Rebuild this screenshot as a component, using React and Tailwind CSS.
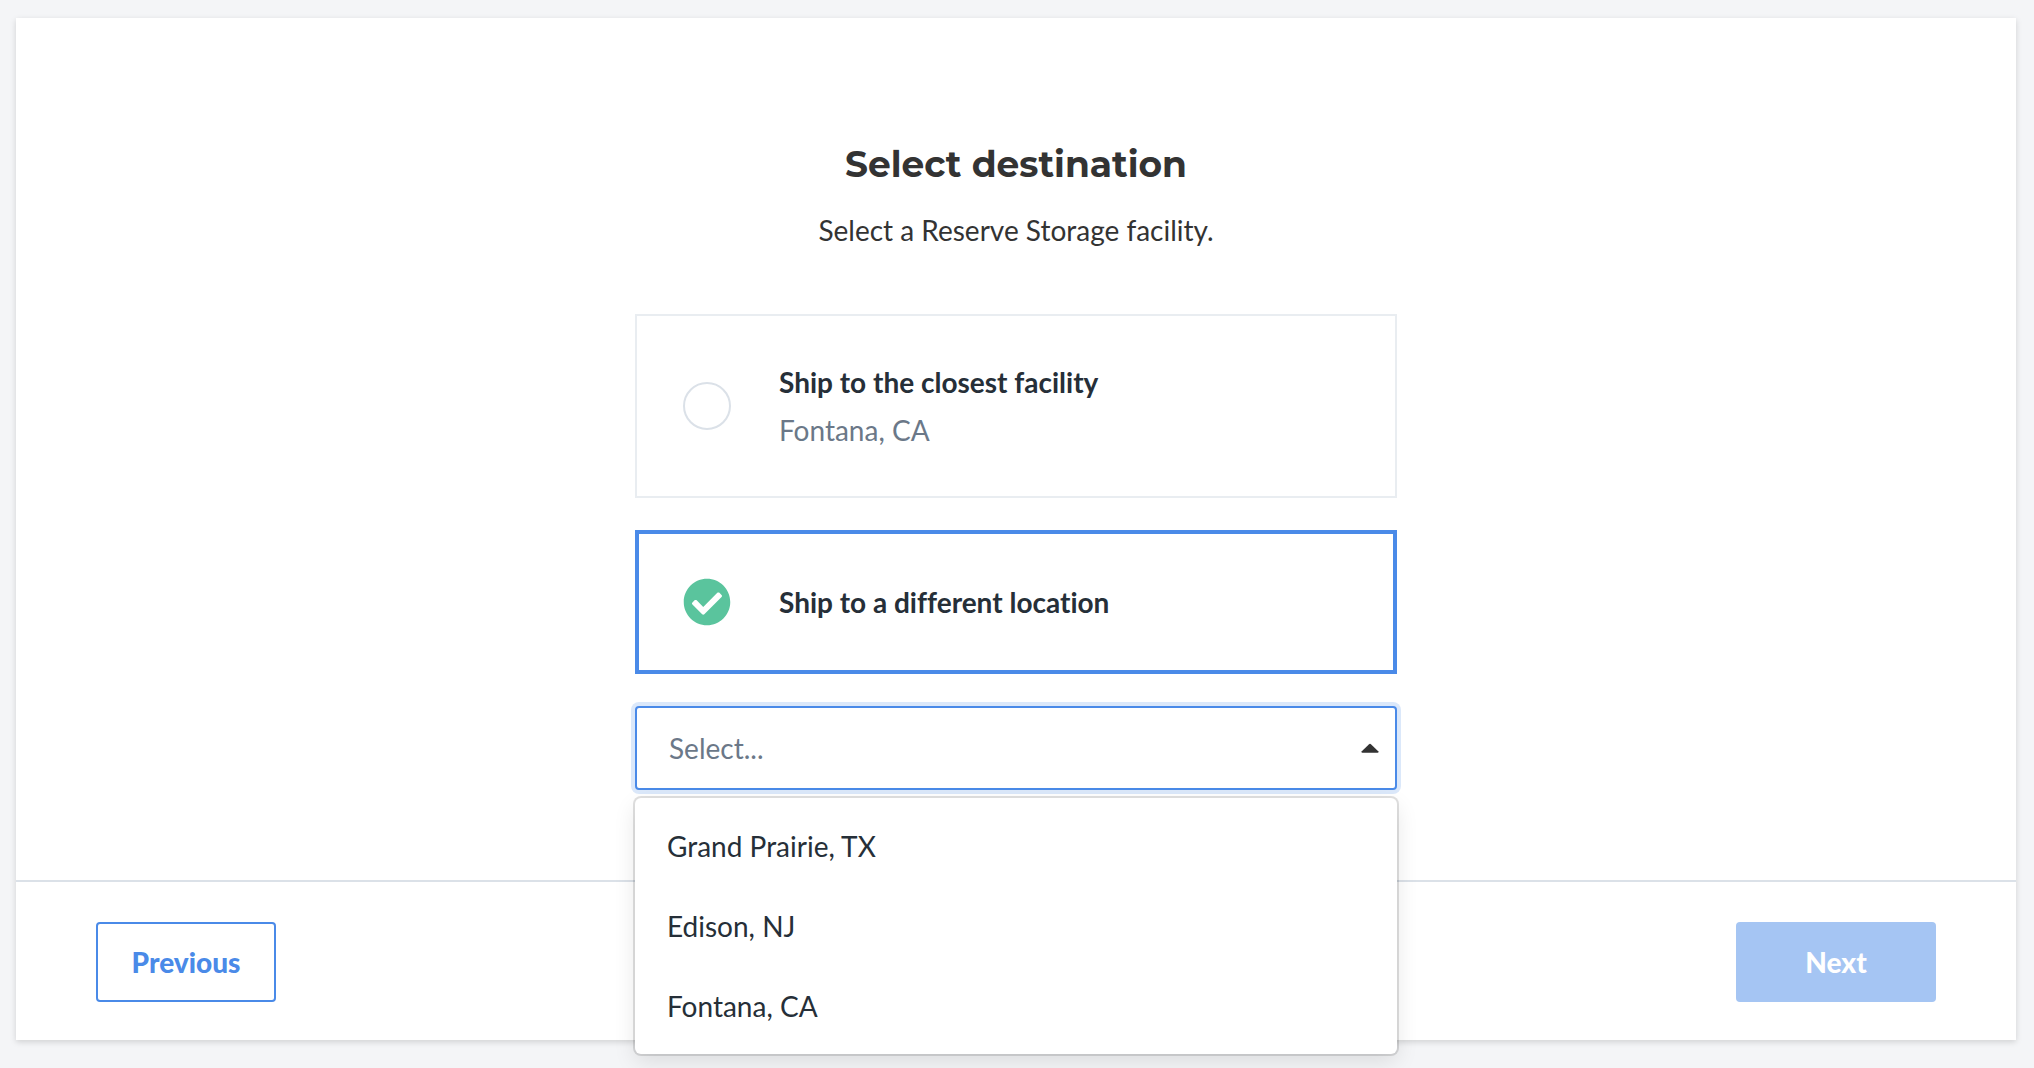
import { useState } from "react";
import clsx from "clsx";
import { FaCheckCircle } from "react-icons/fa";

const facilities = ["Grand Prairie, TX", "Edison, NJ", "Fontana, CA"];

function ShipOption({ value, title, detail, checked, onSelect }) {
  return (
    <label
      className={clsx(
        "flex cursor-pointer items-center gap-12",
        checked
          ? "border-4 border-[#4a8ae8] px-11 py-11"
          : "border-2 border-[#e9edf1] px-[46px] py-[42px]"
      )}
    >
      <span className="grid shrink-0 place-items-center">
        <input
          type="radio"
          name="destination"
          value={value}
          checked={checked}
          onChange={() => onSelect(value)}
          className={clsx(
            "col-start-1 row-start-1 size-12 appearance-none rounded-full outline-none",
            !checked && "border-2 border-[#dbe1e8]"
          )}
        />
        {checked && (
          <FaCheckCircle
            aria-hidden="true"
            className="pointer-events-none col-start-1 row-start-1 size-12 text-[#5ac49d]"
          />
        )}
      </span>
      <span className="flex flex-col leading-[48px]">
        <span className="font-bold text-[#262f38]">{title}</span>
        {detail && <span className="text-[#6b7888]">{detail}</span>}
      </span>
    </label>
  );
}

function FacilitySelect() {
  const [open, setOpen] = useState(true);
  const [facility, setFacility] = useState("");

  const pick = (name) => {
    setFacility(name);
    setOpen(false);
  };

  return (
    <div className="relative">
      <div className="grid items-center">
        <select
          aria-label="Facility"
          value={facility}
          onChange={(e) => pick(e.target.value)}
          onMouseDown={(e) => {
            // the list below replaces the native popup
            e.preventDefault();
            setOpen(!open);
          }}
          className={clsx(
            "col-start-1 row-start-1 h-[84px] w-full appearance-none rounded border-2 bg-white px-8 outline-none",
            open ? "border-[#4a8ae8] ring-4 ring-[#dbe8fa]" : "border-[#dbe1e8]",
            facility ? "text-[#262f38]" : "text-[#6b7888]"
          )}
        >
          <option value="">Select...</option>
          {facilities.map((name) => (
            <option key={name}>{name}</option>
          ))}
        </select>
        <svg
          viewBox="0 0 18 10"
          aria-hidden="true"
          className={clsx(
            "pointer-events-none col-start-1 row-start-1 mr-[18px] h-[10px] w-[18px] justify-self-end fill-[#333333]",
            !open && "rotate-180"
          )}
        >
          <path d="M9 0.8 Q9.5 0.8 10.2 1.4 L17.2 8.2 Q18 9.8 16.6 9.8 L1.4 9.8 Q0 9.8 0.8 8.2 L7.8 1.4 Q8.5 0.8 9 0.8 Z" />
        </svg>
      </div>

      {open && (
        <ul
          role="listbox"
          aria-label="Facilities"
          className="absolute inset-x-0 top-full z-10 mt-2 rounded-md bg-white py-2 shadow-[0_0_0_2px_rgba(0,0,0,0.12),0_8px_22px_rgba(0,0,0,0.1)]"
        >
          {facilities.map((name) => (
            <li key={name} role="option" aria-selected={facility === name}>
              <button
                type="button"
                onClick={() => pick(name)}
                className="block h-20 w-full px-8 text-left text-[#262f38]"
              >
                {name}
              </button>
            </li>
          ))}
        </ul>
      )}
    </div>
  );
}

export default function App() {
  const [destination, setDestination] = useState("different");

  return (
    <div className="min-h-screen bg-[#f4f5f7] pt-[18px] pr-[18px] pb-7 pl-4 font-['Lato',sans-serif] text-[28px] [font-variant-ligatures:no-common-ligatures]">
      <main className="bg-white shadow-[0_2px_6px_rgba(0,0,0,0.15)]">
        <section className="mx-auto w-full max-w-[762px] pt-[124px] pb-[90px]">
          <header className="text-center text-[#333333]">
            <h1 className="font-['Montserrat','Inter',sans-serif] text-[36px] leading-[44px] font-bold">
              Select destination
            </h1>
            <p className="mt-6 leading-10">Select a Reserve Storage facility.</p>
          </header>

          <div className="mt-16 flex flex-col gap-8">
            <ShipOption
              value="closest"
              title="Ship to the closest facility"
              detail="Fontana, CA"
              checked={destination === "closest"}
              onSelect={setDestination}
            />
            <ShipOption
              value="different"
              title="Ship to a different location"
              checked={destination === "different"}
              onSelect={setDestination}
            />
            {destination === "different" && <FacilitySelect />}
          </div>
        </section>

        <footer className="flex items-center justify-between border-t-2 border-[#dbe1e8] px-20 pt-10 pb-[38px] font-['Lato_Black','Lato',sans-serif] font-black">
          <button
            type="button"
            className="h-20 w-[180px] rounded border-2 border-[#4a8ae8] text-[#4a8ae8]"
          >
            Previous
          </button>
          <button
            type="button"
            disabled
            className="h-20 w-[200px] rounded bg-[#a5c5f3] text-white"
          >
            Next
          </button>
        </footer>
      </main>
    </div>
  );
}
